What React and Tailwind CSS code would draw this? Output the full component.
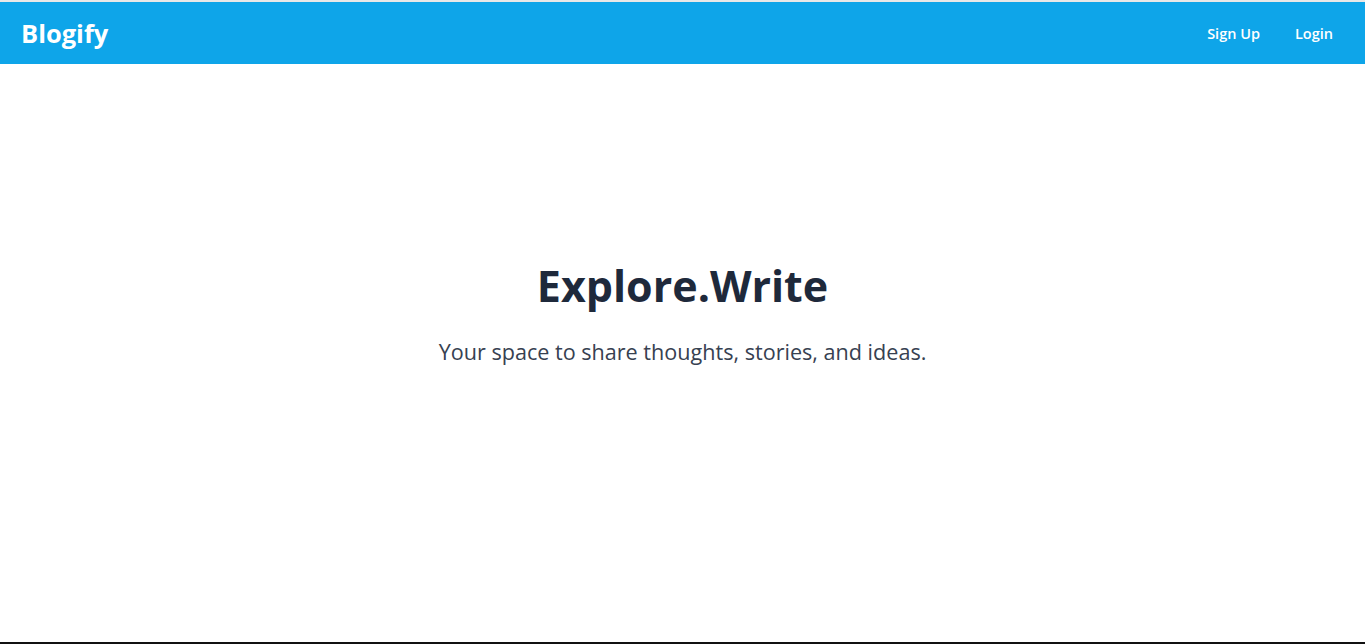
export default function App() {
  return (
    <div
      className="flex h-[644px] flex-col border-t-2 border-b-2 border-t-[#e8e8e8] border-b-[#111111] bg-white"
      style={{ fontFamily: '"Open Sans", "Noto Sans", sans-serif' }}
    >
      <header className="flex h-[62px] items-center justify-between bg-[#0ea5e9] pl-[21px] pr-[32px]">
        <a href="#" className="text-[25.5px] font-bold text-white">
          Blogify
        </a>
        <nav className="flex items-center gap-[35px] pt-[2px]">
          <a href="#" className="text-[14.5px] font-semibold text-white">
            Sign Up
          </a>
          <a href="#" className="text-[14.5px] font-semibold text-white">
            Login
          </a>
        </nav>
      </header>

      <main className="flex flex-1 flex-col items-center pt-[200px] text-center">
        <h1 className="text-[43px] leading-none font-bold text-[#1e293b]">Explore.Write</h1>
        <p className="mt-[31px] text-[21.6px] leading-7 text-[#374151]">
          Your space to share thoughts, stories, and ideas.
        </p>
      </main>
    </div>
  );
}
